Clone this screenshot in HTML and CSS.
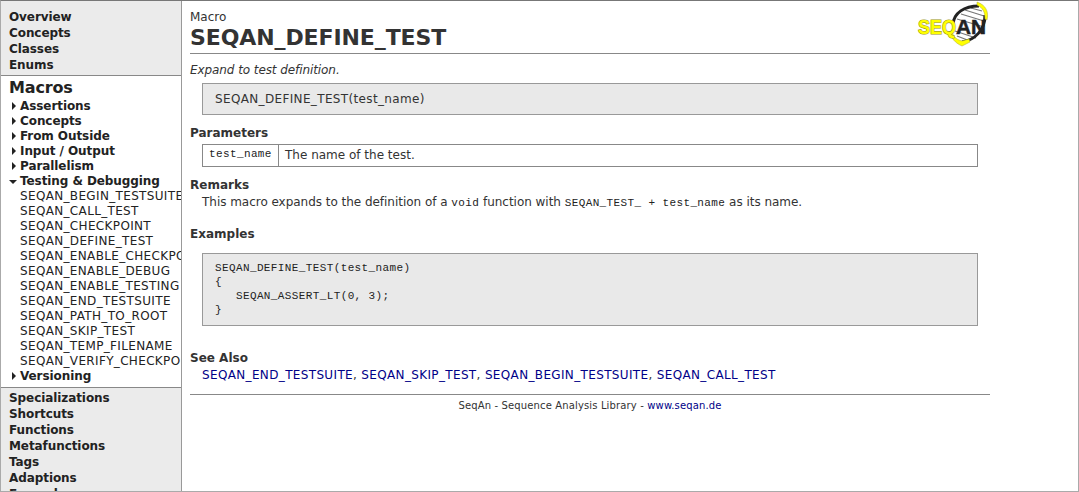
FILE: index.html
```
<!DOCTYPE html>
<html lang="en">
<head>
<meta charset="utf-8">
<title>SEQAN_DEFINE_TEST</title>
<link rel="stylesheet" href="styles.css">
</head>
<body>
<div class="frame">
  <nav class="sidebar">
    <ul class="group top">
      <li>Overview</li><li>Concepts</li><li>Classes</li><li>Enums</li>
    </ul>
    <section class="current">
      <h2>Macros</h2>
      <ul class="tree">
        <li class="node">Assertions</li>
        <li class="node">Concepts</li>
        <li class="node">From Outside</li>
        <li class="node">Input / Output</li>
        <li class="node">Parallelism</li>
        <li class="node open">Testing &amp; Debugging</li>
        <li>SEQAN_BEGIN_TESTSUITE</li>
        <li>SEQAN_CALL_TEST</li>
        <li>SEQAN_CHECKPOINT</li>
        <li>SEQAN_DEFINE_TEST</li>
        <li>SEQAN_ENABLE_CHECKPOINT</li>
        <li>SEQAN_ENABLE_DEBUG</li>
        <li>SEQAN_ENABLE_TESTING</li>
        <li>SEQAN_END_TESTSUITE</li>
        <li>SEQAN_PATH_TO_ROOT</li>
        <li>SEQAN_SKIP_TEST</li>
        <li>SEQAN_TEMP_FILENAME</li>
        <li>SEQAN_VERIFY_CHECKPOINT</li>
        <li class="node">Versioning</li>
      </ul>
    </section>
    <ul class="group bottom">
      <li>Specializations</li><li>Shortcuts</li><li>Functions</li><li>Metafunctions</li><li>Tags</li><li>Adaptions</li><li>Examples</li>
    </ul>
  </nav>
  <main class="page">
    <header class="head">
      <div>
        <div class="kind">Macro</div>
        <h1>SEQAN_DEFINE_TEST</h1>
      </div>
      <svg class="logo" width="74" height="48" viewBox="0 0 74 48">
        <path d="M39 23C40 12 50 5 65 5C71 12 72 24 65 32C59 39 52 41 46 41C40 36 38 29 39 23Z" fill="#fff"/>
        <path d="M46 13L69 20M50 9L69 15M56 7L67 10M42 18L69 26M40 30L61 37M42 35L55 40" stroke="#777" stroke-width="1.2"/>
        <path d="M38 23C39 12 49 5 64 5" fill="none" stroke="#222" stroke-width="3"/>
        <path d="M47 41C60 39 70 29 70 14" fill="none" stroke="#222" stroke-width="3"/>
        <path d="M62 1C71 4 74 11 72 19L70 18C70 11 68 7 62 4Z" fill="#ff0" stroke="#a9a63a" stroke-width=".5"/>
        <path d="M37 31C39 37 43 39 47 40L54 38L55 41L47 45C40 42 36 37 35 31Z" fill="#ff0" stroke="#a9a63a" stroke-width=".5"/>
        <text class="logo-seq" x="3" y="33" textLength="38" lengthAdjust="spacingAndGlyphs">SEQ</text>
        <text class="logo-an" x="41" y="33" textLength="30" lengthAdjust="spacingAndGlyphs">AN</text>
      </svg>
    </header>
    <p class="summary">Expand to test definition.</p>
    <div class="signature">SEQAN_DEFINE_TEST(test_name)</div>
    <h3 class="h-params">Parameters</h3>
    <div class="params"><code>test_name</code><span>The name of the test.</span></div>
    <h3 class="h-remarks">Remarks</h3>
    <p class="text">This macro expands to the definition of a <code>void</code> function with <code>SEQAN_TEST_ + test_name</code> as its name.</p>
    <h3 class="h-examples">Examples</h3>
    <pre class="example">SEQAN_DEFINE_TEST(test_name)
{
   SEQAN_ASSERT_LT(0, 3);
}</pre>
    <h3 class="h-see">See Also</h3>
    <p class="text see"><a>SEQAN_END_TESTSUITE</a>, <a>SEQAN_SKIP_TEST</a>, <a>SEQAN_BEGIN_TESTSUITE</a>, <a>SEQAN_CALL_TEST</a></p>
    <footer class="foot">SeqAn - Sequence Analysis Library - <a>www.seqan.de</a></footer>
  </main>
</div>
</body>
</html>
```
FILE: styles.css
```
* { box-sizing: border-box; margin: 0; padding: 0; }
body { font: 12px/16px "DejaVu Sans", sans-serif; color: #333; background: #fff; overflow: hidden; }
.frame { display: flex; height: 492px; border: 1px solid #aaa; border-top-color: #777; overflow: hidden; }
ul { list-style: none; }
.sidebar { flex: none; width: 181px; height: 490px; border-right: 1px solid #999; overflow: hidden; color: #222; white-space: nowrap; }
.group { background: #ebebeb; font-weight: bold; padding-left: 8px; letter-spacing: -.08px; }
.top { height: 74px; padding-top: 8px; }
.bottom { padding-top: 2px; height: 120px; }
.current { height: 313px; border-top: 1px solid #888; border-bottom: 1px solid #888; padding-top: 2px; }
.current h2 { font-size: 16px; line-height: 20px; padding-left: 8px; letter-spacing: -.15px; }
.tree { padding-top: 1px; }
.tree li { line-height: 15px; padding-left: 19px; letter-spacing: .34px; }
.tree .node { display: flex; align-items: center; padding-left: 11px; font-weight: bold; letter-spacing: -.08px; }
.node::before { content: ""; border: 4px solid transparent; border-left: 4px solid #222; border-right: 0; margin: -1px 4px 0 0; }
.tree .open { padding-left: 8px; }
.open::before { border: 4px solid transparent; border-top: 4px solid #222; border-bottom: 0; margin: 0 3px 0 0; }
.page { width: 800px; margin-left: 8px; }
.head { display: flex; justify-content: space-between; height: 53px; border-bottom: 1px solid #888; padding-top: 8px; }
h1 { font-size: 22px; line-height: 25px; letter-spacing: -.1px; }
h3 { font-size: 12px; line-height: 16px; }
.logo { margin: -8px 1px 0 0; }
.logo text { font: bold 21px "Liberation Sans", sans-serif; }
.logo-seq { fill: #ff0; stroke: #999520; stroke-width: 1.2px; paint-order: stroke; }
.logo-an { fill: #222; stroke: #222; stroke-width: .5px; }
.summary { font-style: italic; margin-top: 8px; letter-spacing: -.08px; }
.signature { margin: 5px 12px 0; height: 32px; padding: 7px 12px; background: #e9e9e9; border: 1px solid #999; letter-spacing: .35px; }
.h-params { margin-top: 10px; }
.params { display: flex; margin: 3px 12px 0; height: 23px; border: 1px solid #888; line-height: 20px; }
.params code { width: 76px; padding-left: 6px; border-right: 1px solid #888; line-height: 18px; }
.params span { padding-left: 6px; }
code, pre { font-family: "Liberation Mono", monospace; font-size: 11px; color: #222; letter-spacing: .38px; }
.h-remarks { margin-top: 10px; }
.text { margin-top: 1px; padding-left: 12px; letter-spacing: -.03px; }
.text.see { letter-spacing: .35px; }
.h-examples { margin-top: 15px; }
.example { margin: 11px 12px 0; height: 73px; padding: 7px 12px; border: 1px solid #999; background: #e9e9e9; line-height: 14px; }
.h-see { margin-top: 24px; }
a { color: #008; }
.foot { margin-top: 11px; padding-top: 3px; border-top: 1px solid #888; text-align: center; font-size: 10px; letter-spacing: .14px; }
```
